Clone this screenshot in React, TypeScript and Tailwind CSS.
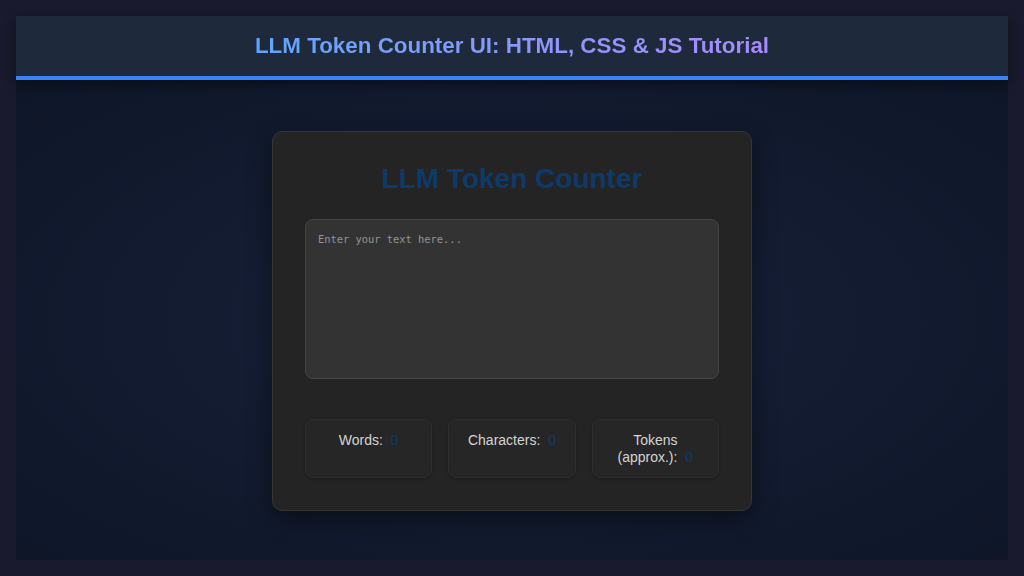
import { useState } from 'react'

// rough token estimate: ~4 chars per token
function countStats(text: string) {
  const trimmed = text.trim()
  const words = trimmed ? trimmed.split(/\s+/).length : 0
  const chars = text.length
  const tokens = Math.ceil(chars / 4)
  return { words, chars, tokens }
}

function StatBox({ label, value }: { label: string; value: number }) {
  return (
    <div className="rounded-lg border border-[#2f2f2f] bg-[#262626] px-3 py-3 text-center text-[14px] leading-[16.5px] text-[#d4d4d4] shadow-[0_1px_3px_rgba(0,0,0,0.25)]">
      {label} <span className="ml-[4px] text-[#0e3a6b]">{value}</span>
    </div>
  )
}

export default function App() {
  const [text, setText] = useState('')
  const stats = countStats(text)

  return (
    <div className="min-h-[576px] bg-[#1a1a2e] px-4 pt-4 pb-4 font-['Liberation_Sans',Arial,sans-serif]">
      <div className="flex h-[544px] flex-col bg-[#0f172a]">
        <header className="relative z-10 flex h-[64px] shrink-0 items-center justify-center border-b-4 border-[#3b82f6] bg-[#1e293b] shadow-[0_4px_10px_rgba(0,0,0,0.45)]">
          <h1 className="inline-block bg-gradient-to-r from-[#60a5fa] to-[#a78bfa] bg-clip-text text-[22.4px] font-bold text-transparent">
            LLM Token Counter UI: HTML, CSS &amp; JS Tutorial
          </h1>
        </header>

        <main className="flex flex-1 items-center justify-center bg-[radial-gradient(ellipse_at_center,#18223a_0%,#131c31_45%,#0e1628_100%)]">
          <div className="mt-[2px] w-[480px] rounded-[10px] border border-[#363636] bg-[#242424] px-[32px] pt-[31px] pb-[32px] shadow-[0_8px_24px_rgba(0,0,0,0.45)]">
            <h2 className="mb-[24px] text-center text-[28px] leading-[32px] font-bold text-[#0e3a6b]">
              LLM Token Counter
            </h2>
            <textarea
              value={text}
              onChange={(e) => setText(e.target.value)}
              placeholder="Enter your text here..."
              className="block h-[160px] w-full resize-none rounded-lg border border-[#454545] bg-[#333333] p-3 font-['DejaVu_Sans_Mono',monospace] text-[10.4px] text-[#ddd] placeholder:text-[#939393] focus:outline-none"
            />
            <div className="mt-[40px] grid grid-cols-3 gap-4">
              <StatBox label="Words:" value={stats.words} />
              <StatBox label="Characters:" value={stats.chars} />
              <StatBox label="Tokens (approx.):" value={stats.tokens} />
            </div>
          </div>
        </main>
      </div>
    </div>
  )
}
